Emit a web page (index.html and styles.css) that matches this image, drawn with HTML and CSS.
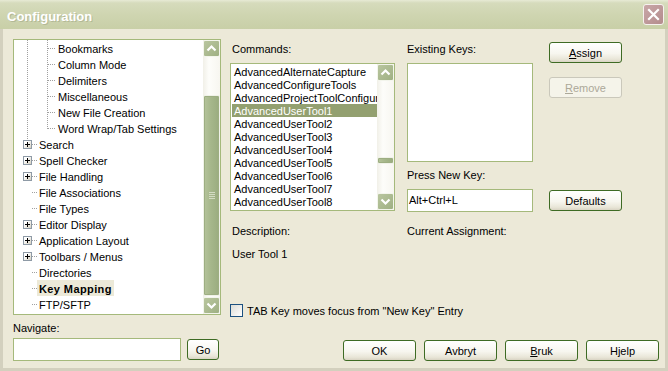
FILE: index.html
```html
<!DOCTYPE html>
<html>
<head>
<meta charset="utf-8">
<link rel="stylesheet" href="styles.css">
</head>
<body>
<div class="window">
  <div class="titlebar">
    <span class="title">Configuration</span>
    <div class="close">
      <svg width="13" height="13" viewBox="0 0 13 13"><path d="M2 2 L11 11 M11 2 L2 11" stroke="#fff" stroke-width="2.2" stroke-linecap="square"/></svg>
    </div>
  </div>
  <div class="frame">
    <div class="left">
      <div class="tree">
        <div class="tree-items">
          <div class="row child"><span class="t">Bookmarks</span></div>
          <div class="row child"><span class="t">Column Mode</span></div>
          <div class="row child"><span class="t">Delimiters</span></div>
          <div class="row child"><span class="t">Miscellaneous</span></div>
          <div class="row child"><span class="t">New File Creation</span></div>
          <div class="row child last"><span class="t">Word Wrap/Tab Settings</span></div>
          <div class="row node first"><span class="pm"></span><span class="t">Search</span></div>
          <div class="row node"><span class="pm"></span><span class="t">Spell Checker</span></div>
          <div class="row node"><span class="pm"></span><span class="t">File Handling</span></div>
          <div class="row leaf"><span class="t">File Associations</span></div>
          <div class="row leaf"><span class="t">File Types</span></div>
          <div class="row node"><span class="pm"></span><span class="t">Editor Display</span></div>
          <div class="row node"><span class="pm"></span><span class="t">Application Layout</span></div>
          <div class="row node"><span class="pm"></span><span class="t">Toolbars / Menus</span></div>
          <div class="row leaf"><span class="t">Directories</span></div>
          <div class="row leaf"><span class="t sel">Key Mapping</span></div>
          <div class="row leaf"><span class="t">FTP/SFTP</span></div>
        </div>
        <div class="sb">
          <div class="sb-btn"><svg width="15" height="15" viewBox="0 0 15 15"><path d="M3.5 9.5 L7.5 5.5 L11.5 9.5" fill="none" stroke="#fff" stroke-width="2.2"/></svg></div>
          <div class="sb-track"><div class="thumb tree-thumb"><div class="grip"></div></div></div>
          <div class="sb-btn"><svg width="15" height="15" viewBox="0 0 15 15"><path d="M3.5 5.5 L7.5 9.5 L11.5 5.5" fill="none" stroke="#fff" stroke-width="2.2"/></svg></div>
        </div>
      </div>
      <div class="lbl nav-lbl">Navigate:</div>
      <div class="nav-row">
        <div class="input nav-input"></div>
        <div class="btn go">Go</div>
      </div>
    </div>
    <div class="right">
      <div class="top">
        <div class="cmd-col">
          <div class="lbl pad">Commands:</div>
          <div class="list">
            <div class="list-items">
              <div class="item">AdvancedAlternateCapture</div>
              <div class="item">AdvancedConfigureTools</div>
              <div class="item">AdvancedProjectToolConfiguration</div>
              <div class="item sel">AdvancedUserTool1</div>
              <div class="item">AdvancedUserTool2</div>
              <div class="item">AdvancedUserTool3</div>
              <div class="item">AdvancedUserTool4</div>
              <div class="item">AdvancedUserTool5</div>
              <div class="item">AdvancedUserTool6</div>
              <div class="item">AdvancedUserTool7</div>
              <div class="item">AdvancedUserTool8</div>
            </div>
            <div class="sb">
              <div class="sb-btn"><svg width="15" height="15" viewBox="0 0 15 15"><path d="M3.5 9.5 L7.5 5.5 L11.5 9.5" fill="none" stroke="#fff" stroke-width="2.2"/></svg></div>
              <div class="sb-track"><div class="thumb cmd-thumb"></div></div>
              <div class="sb-btn"><svg width="15" height="15" viewBox="0 0 15 15"><path d="M3.5 5.5 L7.5 9.5 L11.5 5.5" fill="none" stroke="#fff" stroke-width="2.2"/></svg></div>
            </div>
          </div>
        </div>
        <div class="keys-col">
          <div class="lbl">Existing Keys:</div>
          <div class="keys-box"></div>
          <div class="lbl press-lbl">Press New Key:</div>
          <div class="input key-input">Alt+Ctrl+L</div>
        </div>
        <div class="btn-col">
          <div class="btn"><u>A</u>ssign</div>
          <div class="btn disabled remove"><u>R</u>emove</div>
          <div class="btn defaults">Defaults</div>
        </div>
      </div>
      <div class="desc-row">
        <div class="lbl pad desc-cell">Description:</div>
        <div class="lbl">Current Assignment:</div>
      </div>
      <div class="lbl pad desc-val">User Tool 1</div>
      <div class="check-row">
        <span class="cb"></span>
        <span class="cb-lbl">TAB Key moves focus from "New Key" Entry</span>
      </div>
      <div class="bottom-btns">
        <div class="btn">OK</div>
        <div class="btn">Avbryt</div>
        <div class="btn"><u>B</u>ruk</div>
        <div class="btn">Hjelp</div>
      </div>
    </div>
  </div>
</div>
</body>
</html>
```
FILE: styles.css
```css
* { box-sizing: border-box; }
body {
  margin: 0;
  font-family: "Liberation Sans", Arial, sans-serif;
  font-size: 11px;
  color: #000;
}
.window {
  width: 668px;
  height: 371px;
  background: #ECE9D8;
  display: flex;
  flex-direction: column;
  overflow: hidden;
}
.titlebar {
  height: 29px;
  flex: none;
  background: linear-gradient(#E7EAD5 0, #D6DBBC 3px, #CFD5B1 50%, #C8CFA7 100%);
  display: flex;
  align-items: center;
  justify-content: space-between;
  padding: 0 4px 0 7px;
}
.title {
  color: #fff;
  font-weight: bold;
  font-size: 13px;
  margin-top: 3px;
  text-shadow: 1px 1px 0 #B3B996;
}
.close {
  width: 21px;
  height: 21px;
  border: 1px solid #F6F1EF;
  border-radius: 3px;
  background: linear-gradient(135deg, #C9A7A8, #B48C8D);
  display: flex;
  align-items: center;
  justify-content: center;
}
.frame {
  flex: 1;
  display: flex;
  border: 3px solid #D3D0BE;
  border-top: none;
  padding: 10px 6px 0 10px;
}
.left {
  width: 208px;
  flex: none;
  display: flex;
  flex-direction: column;
}
.tree {
  height: 276px;
  border: 1px solid #A5B97B;
  background: #fff;
  display: flex;
}
.tree-items {
  flex: 1;
  overflow: hidden;
}
.row {
  height: 16px;
  line-height: 16px;
  white-space: nowrap;
  display: flex;
  background-repeat: no-repeat;
}
.row .t {
  display: inline-block;
  padding: 1px 2px 0;
  height: 16px;
  line-height: 16px;
}
.row .t.sel {
  background: #ECE9D8;
  font-weight: bold;
  letter-spacing: 0.4px;
}
.child {
  padding-left: 42px;
  background-image:
    repeating-linear-gradient(to bottom, #A0A0A0 0 1px, transparent 1px 2px),
    repeating-linear-gradient(to bottom, #A0A0A0 0 1px, transparent 1px 2px),
    repeating-linear-gradient(to right, #A0A0A0 0 1px, transparent 1px 2px);
  background-position: 13px 0, 33px 0, 34px 8px;
  background-size: 1px 16px, 1px 16px, 7px 1px;
}
.child.last {
  background-size: 1px 16px, 1px 9px, 7px 1px;
}
.node {
  background-image: repeating-linear-gradient(to right, #A0A0A0 0 1px, transparent 1px 2px);
  background-position: 18px 8px;
  background-size: 5px 1px;
}
.node.first {
  background-image:
    repeating-linear-gradient(to right, #A0A0A0 0 1px, transparent 1px 2px),
    repeating-linear-gradient(to bottom, #A0A0A0 0 1px, transparent 1px 2px);
  background-position: 18px 8px, 13px 0;
  background-size: 5px 1px, 1px 4px;
}
.leaf {
  padding-left: 23px;
  background-image: repeating-linear-gradient(to right, #A0A0A0 0 1px, transparent 1px 2px);
  background-position: 18px 8px;
  background-size: 5px 1px;
}
.pm {
  width: 9px;
  height: 9px;
  margin: 4px 5px 0 9px;
  flex: none;
  border: 1px solid #8E9AA6;
  background:
    linear-gradient(#000, #000) no-repeat 1px 3px / 5px 1px,
    linear-gradient(#000, #000) no-repeat 3px 1px / 1px 5px,
    linear-gradient(135deg, #FFFFFF 30%, #D6D0C0);
}
.sb {
  width: 17px;
  flex: none;
  display: flex;
  flex-direction: column;
  background: linear-gradient(to right, #F1F0E8, #FDFDFA 35%, #F7F6F0);
}
.sb-btn {
  height: 17px;
  flex: none;
  border: 1px solid #F3F5EC;
  border-radius: 2px;
  background: linear-gradient(135deg, #B9C69F, #9FB083);
  display: flex;
  align-items: center;
  justify-content: center;
}
.sb-track {
  flex: 1;
}
.thumb {
  border: 1px solid #F0F2E8;
  border-radius: 2px;
  background: linear-gradient(to right, #B5C39B, #A6B78B 45%, #9AAC7F);
  box-shadow: inset 0 0 0 1px #9DAE82;
  display: flex;
  align-items: center;
  justify-content: center;
}
.tree-thumb {
  margin-top: 38px;
  height: 201px;
}
.grip {
  width: 6px;
  height: 7px;
  background: repeating-linear-gradient(#D3DBC3 0 1px, transparent 1px 2px);
}
.cmd-thumb {
  margin-top: 76px;
  height: 7px;
}
.lbl {
  height: 13px;
  padding-top: 1px;
  line-height: 13px;
  white-space: nowrap;
}
.pad { padding-left: 2px; }
.nav-lbl { margin-top: 6px; }
.nav-row {
  margin-top: 4px;
  display: flex;
  align-items: center;
}
.input {
  border: 1px solid #A5B97B;
  background: #fff;
}
.nav-input {
  width: 168px;
  height: 23px;
}
.btn {
  width: 73px;
  height: 21px;
  border: 1px solid #3E6B24;
  border-radius: 3px;
  background: linear-gradient(#FFFFFF 0%, #F7F6EF 55%, #E9E6D8 85%, #D9D4C4 100%);
  display: flex;
  align-items: center;
  justify-content: center;
  flex: none;
}
.btn.disabled {
  border-color: #CAC8BB;
  background: #F5F4EA;
  color: #ACA899;
}
.go {
  width: 32px;
  margin-left: 6px;
}
.right {
  flex: 1;
  margin-left: 9px;
  padding-top: 3px;
  display: flex;
  flex-direction: column;
}
.top {
  display: flex;
}
.cmd-col {
  width: 165px;
  flex: none;
}
.cmd-col .lbl { margin-bottom: 8px; }
.list {
  height: 148px;
  border: 1px solid #A5B97B;
  background: #fff;
  display: flex;
}
.list-items {
  flex: 1;
  overflow: hidden;
  padding-top: 1px;
}
.item {
  height: 13px;
  line-height: 13px;
  padding-top: 1px;
  margin-left: 1px;
  padding-left: 2px;
  white-space: nowrap;
}
.item.sel {
  background: #93A070;
  color: #fff;
}
.keys-col {
  width: 126px;
  flex: none;
  margin-left: 12px;
}
.keys-box {
  margin-top: 8px;
  height: 99px;
  border: 1px solid #A5B97B;
  background: #fff;
}
.press-lbl { margin-top: 6px; }
.key-input {
  margin-top: 8px;
  height: 23px;
  line-height: 21px;
  padding-left: 1px;
}
.btn-col {
  width: 73px;
  margin-left: 16px;
  flex: none;
}
.remove { margin-top: 14px; }
.defaults { margin-top: 92px; }
.desc-row {
  margin-top: 12px;
  display: flex;
}
.desc-cell { width: 177px; }
.desc-val { margin-top: 10px; }
.check-row {
  margin-top: 44px;
  height: 13px;
  display: flex;
  align-items: center;
}
.cb {
  width: 13px;
  height: 13px;
  border: 1px solid #1C5180;
  background: linear-gradient(135deg, #DCDCD5, #FFFFFF);
}
.cb-lbl { margin-left: 4px; }
.bottom-btns {
  margin-top: 23px;
  display: flex;
  justify-content: flex-end;
  gap: 8px;
}
```
